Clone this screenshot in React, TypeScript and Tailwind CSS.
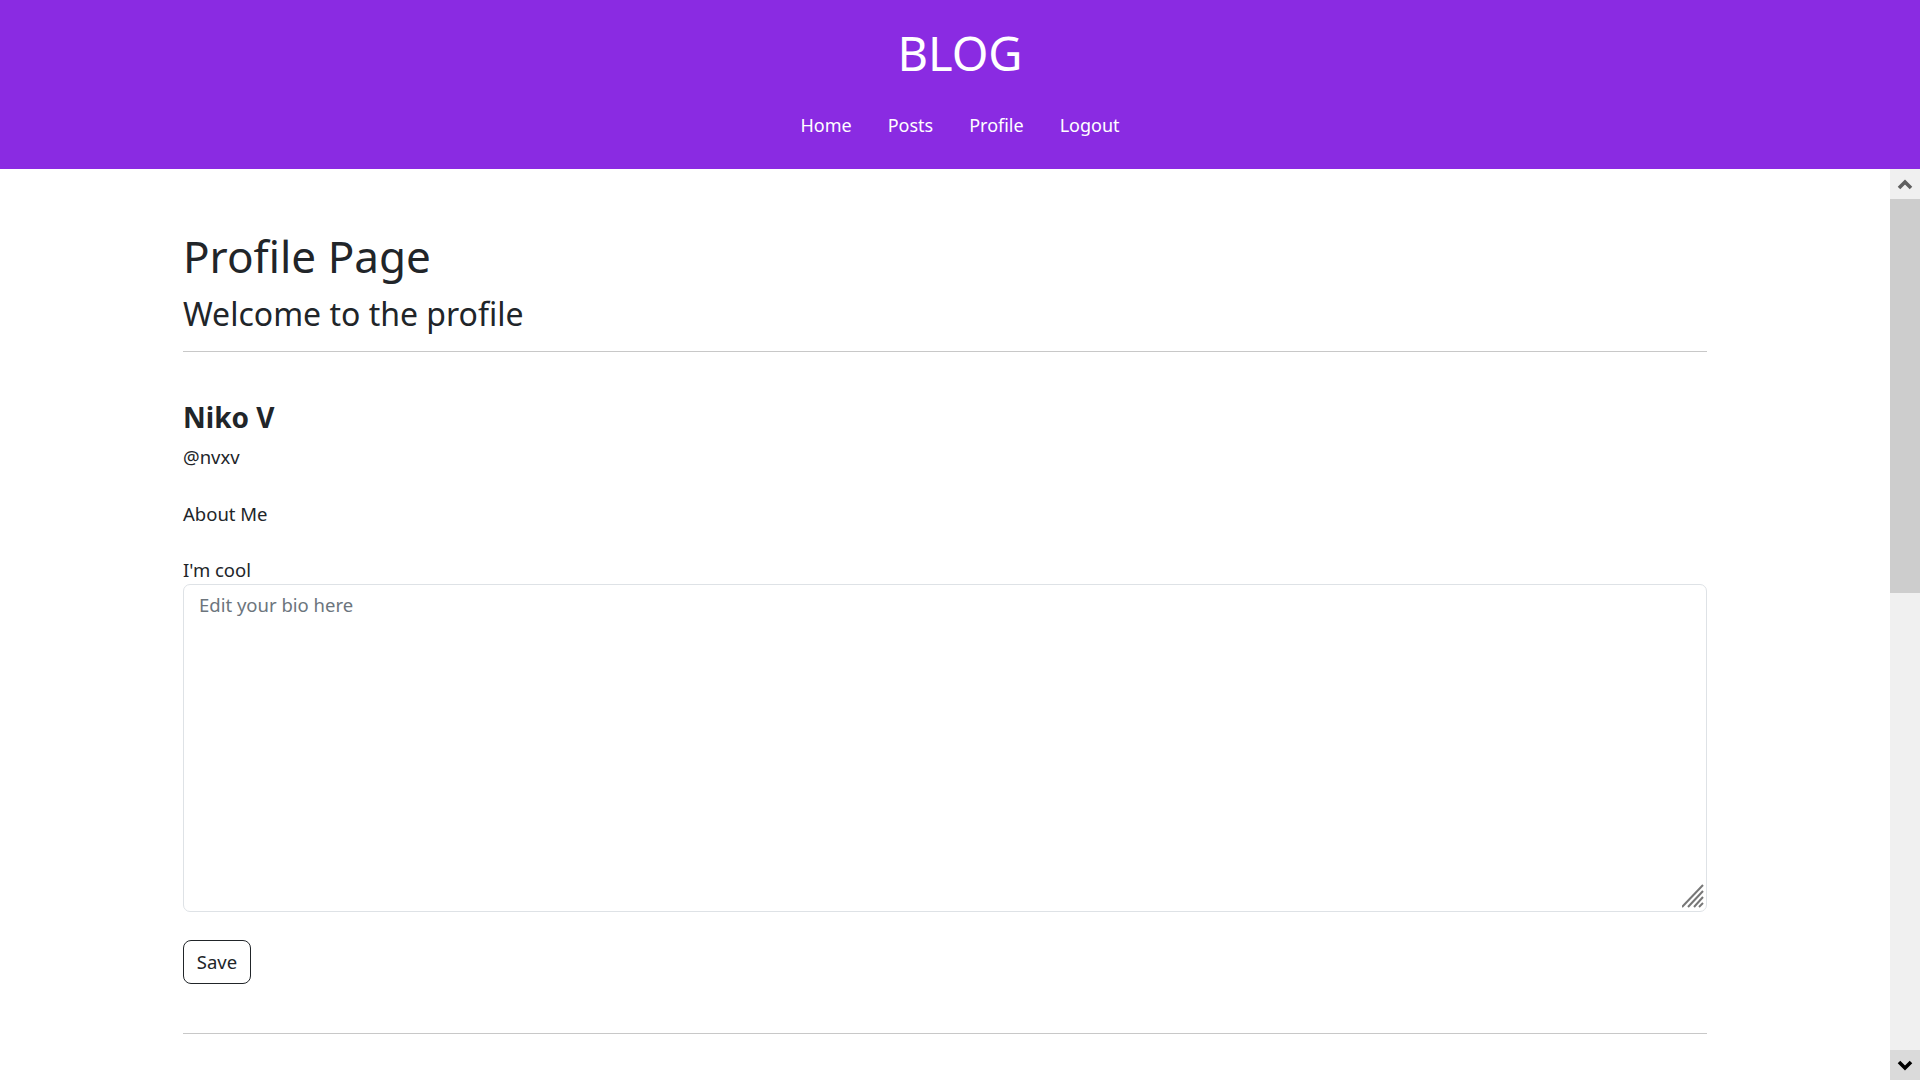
import React from 'react';

const font = { fontFamily: '"Noto Sans", "Open Sans", sans-serif' };

const NavLink = ({ label }: { label: string }) => (
  <a href="#" className="px-[18px] text-[18px] leading-[28px] text-white no-underline">
    {label}
  </a>
);

const Chevron = ({ dir, color }: { dir: 'up' | 'down'; color: string }) => (
  <svg width="16" height="11" viewBox="0 0 16 11">
    <polyline
      points={dir === 'up' ? '2,9 8,3 14,9' : '2,2 8,8 14,2'}
      fill="none"
      stroke={color}
      strokeWidth="3.6"
    />
  </svg>
);

// textarea corner grip, drawn over the box
const ResizeGrip = () => (
  <svg width="22" height="24" viewBox="0 0 22 24" className="absolute right-[3px] bottom-[4px]">
    <g stroke="#777" strokeWidth="2">
      <line x1="0" y1="23" x2="21" y2="1" />
      <line x1="6" y1="23" x2="21" y2="7" />
      <line x1="12" y1="23" x2="21" y2="13" />
      <line x1="17" y1="23" x2="21" y2="19" />
    </g>
  </svg>
);

export default function App() {
  return (
    <div className="h-[1080px] w-[1920px] flex flex-col overflow-hidden bg-white text-[#212529]" style={font}>
      {/* Header */}
      <header className="h-[169px] shrink-0 bg-[#8a2be2] flex flex-col items-center pt-[24px]">
        <h1 className="text-[47px] leading-[58px] font-normal text-white">BLOG</h1>
        <nav className="mt-[29px] flex items-center">
          <NavLink label="Home" />
          <NavLink label="Posts" />
          <NavLink label="Profile" />
          <NavLink label="Logout" />
        </nav>
      </header>

      <div className="flex flex-1 min-h-0">
        {/* Page content */}
        <main className="flex-1 overflow-hidden">
          <div className="w-[1524px] mx-auto pt-[60px]">
            <h1 className="text-[44px] leading-[54px] font-normal">Profile Page</h1>
            <h2 className="mt-[11px] text-[32px] leading-[40px] font-normal">Welcome to the profile</h2>
            <hr className="mt-[17px] border-t border-[#c8c8c8]" />

            <h3 className="mt-[48px] text-[28px] leading-[34px] font-bold">Niko V</h3>
            <p className="mt-[9px] text-[18.5px] leading-[28px]">@nvxv</p>

            <p className="mt-[29px] text-[18.5px] leading-[28px]">About Me</p>
            <p className="mt-[28px] text-[18.5px] leading-[28px]">I'm cool</p>

            <div className="relative">
              <textarea
                placeholder="Edit your bio here"
                className="block w-full h-[328px] resize-none rounded-[7px] border border-[#dee2e6] px-[15px] py-[6px] text-[18.5px] leading-[28px] text-[#212529] placeholder:text-[#6c757d] outline-none"
                style={font}
              />
              <ResizeGrip />
            </div>

            <button className="mt-[28px] h-[44px] w-[68px] rounded-[8px] border border-[#212529] bg-white text-[18.5px] leading-[28px] text-[#212529]">
              Save
            </button>

            <hr className="mt-[49px] border-t border-[#c8c8c8]" />
          </div>
        </main>

        {/* Scrollbar */}
        <div className="w-[30px] shrink-0 flex flex-col bg-[#f0f0f0]">
          <div className="h-[30px] flex items-center justify-center">
            <Chevron dir="up" color="#606060" />
          </div>
          <div className="h-[394px] bg-[#cdcdcd]" />
          <div className="flex-1" />
          <div className="h-[30px] bg-[#dadada] flex items-center justify-center">
            <Chevron dir="down" color="#000000" />
          </div>
        </div>
      </div>
    </div>
  );
}
